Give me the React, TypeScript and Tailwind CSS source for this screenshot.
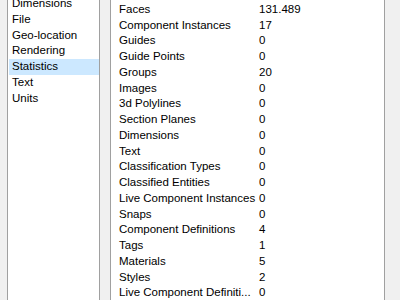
import React from "react";

const left = ["Dimensions", "File", "Geo-location", "Rendering", "Statistics", "Text", "Units"];

const rows: [string, string][] = [
  ["Edges", "263.412"],
  ["Faces", "131.489"],
  ["Component Instances", "17"],
  ["Guides", "0"],
  ["Guide Points", "0"],
  ["Groups", "20"],
  ["Images", "0"],
  ["3d Polylines", "0"],
  ["Section Planes", "0"],
  ["Dimensions", "0"],
  ["Text", "0"],
  ["Classification Types", "0"],
  ["Classified Entities", "0"],
  ["Live Component Instances", "0"],
  ["Snaps", "0"],
  ["Component Definitions", "4"],
  ["Tags", "1"],
  ["Materials", "5"],
  ["Styles", "2"],
  ["Live Component Definiti...", "0"],
  ["Section Plane Count", "0"],
];

export default function App() {
  return (
    <div className="w-[400px] h-[300px] bg-[#f0f0f0] overflow-hidden flex items-start pl-[7px] font-['Liberation_Sans',sans-serif] text-[11.5px] text-black">
      <div className="w-[93px] h-[330px] -mt-[4px] shrink-0 bg-white border-x border-[#a0a0a0] pl-px">
        {left.map((l) => (
          <div
            key={l}
            className={`h-[15.8px] leading-[15.8px] pl-[3px] whitespace-nowrap ${l === "Statistics" ? "bg-[#cce8ff]" : ""}`}
          >
            {l}
          </div>
        ))}
      </div>
      <div className="w-[275px] h-[340px] -mt-[14px] ml-[10px] shrink-0 bg-white border-x border-[#a0a0a0]">
        {rows.map(([n, v]) => (
          <div key={n} className="flex h-[15.75px] leading-[15.75px] whitespace-nowrap">
            <div className="w-[148px] pl-2 pr-1 overflow-hidden">{n}</div>
            <div>{v}</div>
          </div>
        ))}
      </div>
    </div>
  );
}
